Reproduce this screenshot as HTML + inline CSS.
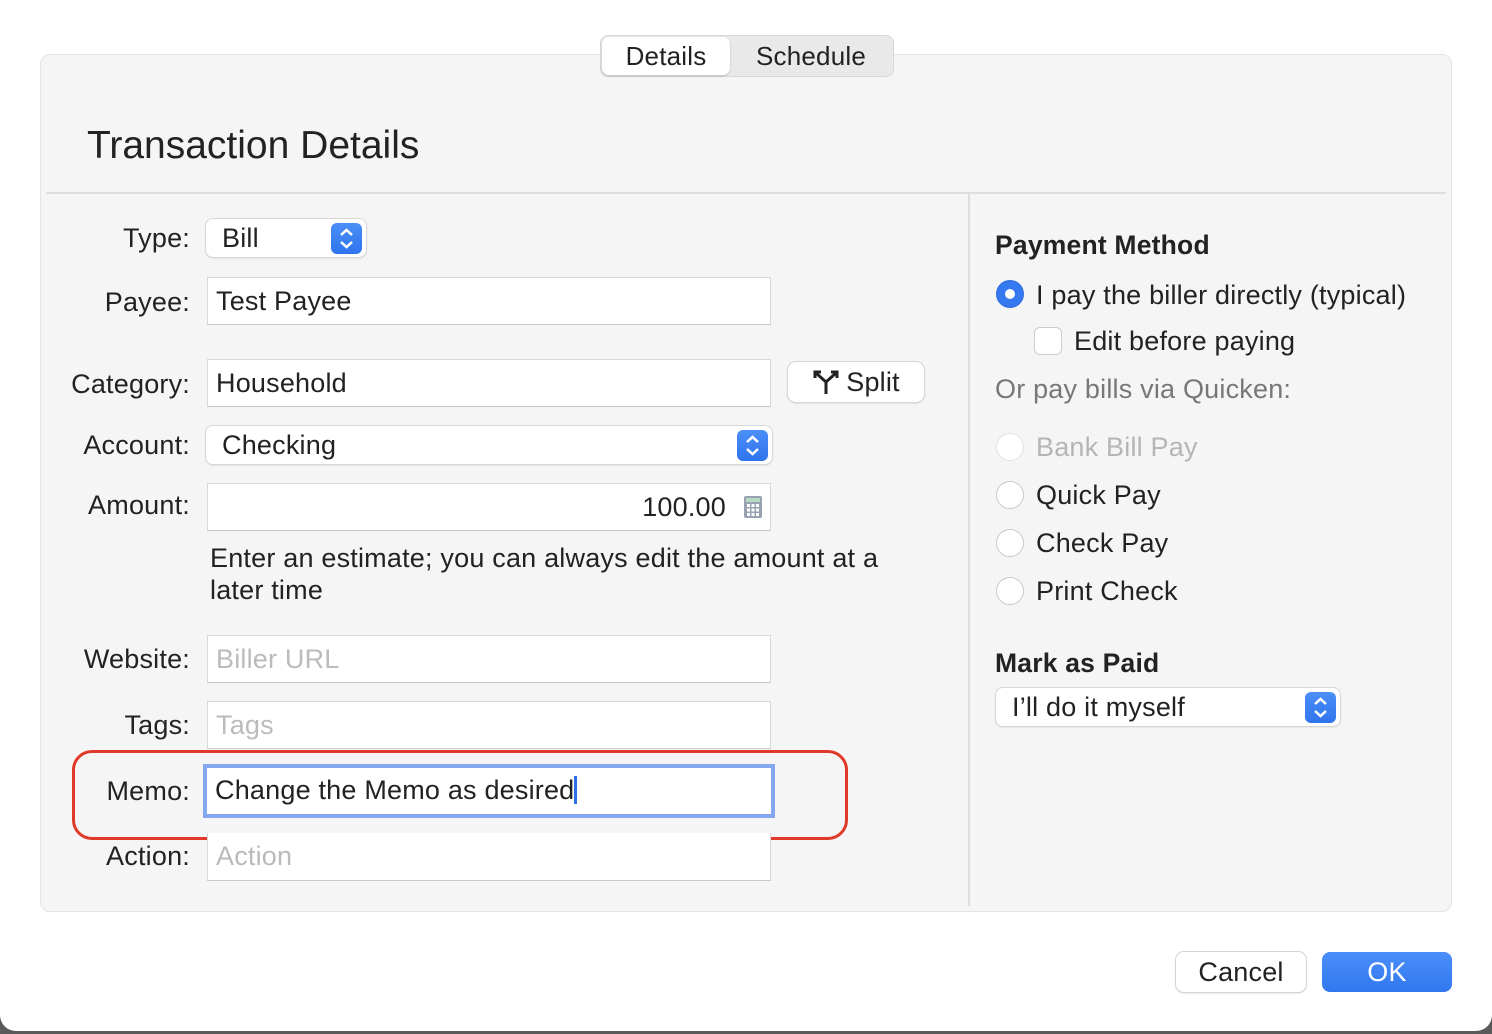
<!DOCTYPE html>
<html><head><meta charset="utf-8"><style>
*{margin:0;padding:0;box-sizing:border-box}
body{width:1492px;height:1034px;background:#5a5a5a;position:relative;overflow:hidden;font-family:"Liberation Sans",sans-serif;color:#222;font-size:27px;letter-spacing:0.2px}
.win{position:absolute;left:0;top:-20px;width:1492px;height:1051px;background:#fff;border-radius:16px}
.panel{position:absolute;left:40px;top:54px;width:1412px;height:858px;background:#f5f5f5;border:1px solid #e4e4e4;border-radius:10px}
.a{position:absolute;line-height:30px;white-space:nowrap}
.lbl{text-align:right;width:190px;left:0}
.field{position:absolute;background:#fff;border:1px solid #d8d8d8;border-bottom-color:#c8c8c8;line-height:46px;padding-left:8px}
.ph{color:#bbb}
.pop{position:absolute;background:#fff;border-radius:7px;box-shadow:0 0 0 1px #d6d6d6,0 1px 2px rgba(0,0,0,.15);line-height:38px;padding-left:16px}
.arrows{position:absolute;right:4px;top:4px;width:31px;height:31px;background:linear-gradient(#4b8ff7,#2f74ee);border-radius:6px}
.btn{position:absolute;background:#fff;border-radius:8px;box-shadow:0 0 0 1px #d4d4d4,0 1px 2px rgba(0,0,0,.2);text-align:center}
.radio{position:absolute;width:28px;height:28px;border-radius:50%;background:#fff;border:1px solid #c9c9c9}
</style></head><body>
<div class="win"></div>
<div class="panel"></div>
<div style="position:absolute;left:600px;top:35px;width:294px;height:42px;background:#e9e9e9;border:1px solid #d8d8d8;border-radius:8px"></div>
<div style="position:absolute;left:602px;top:37px;width:128px;height:38px;background:#fff;border-radius:7px;box-shadow:0 1px 2px rgba(0,0,0,.2)"></div>
<div class="a" style="left:602px;top:41px;width:128px;text-align:center;font-size:26px">Details</div>
<div class="a" style="left:732px;top:41px;width:158px;text-align:center;font-size:26px">Schedule</div>
<div class="a" style="left:87px;top:124px;font-size:39px;line-height:44px;letter-spacing:0">Transaction Details</div>
<div style="position:absolute;left:46px;top:192px;width:1400px;height:2px;background:#dedede"></div>
<div style="position:absolute;left:968px;top:194px;width:2px;height:712px;background:#dedede"></div>

<div class="a lbl" style="top:223px">Type:</div>
<div class="pop" style="left:206px;top:219px;width:160px;height:38px">Bill<div class="arrows"><svg width="31" height="31"><path d="M10 12l5.5-5 5.5 5M10 19l5.5 5 5.5-5" stroke="#fff" stroke-width="2.5" fill="none"/></svg></div></div>

<div class="a lbl" style="top:287px">Payee:</div>
<div class="field" style="left:207px;top:277px;width:564px;height:48px">Test Payee</div>

<div class="a lbl" style="top:369px">Category:</div>
<div class="field" style="left:207px;top:359px;width:564px;height:48px">Household</div>
<div class="btn" style="left:788px;top:362px;width:136px;height:40px;line-height:40px"><svg width="28" height="28" style="vertical-align:-5px;margin-right:6px" viewBox="0 0 28 28"><path d="M14 26V14L4 5M14 14l10-9M3 10V4h6M25 10V4h-6" stroke="#222" stroke-width="3" fill="none"/></svg>Split</div>

<div class="a lbl" style="top:430px">Account:</div>
<div class="pop" style="left:206px;top:426px;width:566px;height:38px">Checking<div class="arrows"><svg width="31" height="31"><path d="M10 12l5.5-5 5.5 5M10 19l5.5 5 5.5-5" stroke="#fff" stroke-width="2.5" fill="none"/></svg></div></div>

<div class="a lbl" style="top:490px">Amount:</div>
<div class="field" style="left:207px;top:483px;width:564px;height:48px;text-align:right;padding-right:44px">100.00</div>
<svg style="position:absolute;left:743px;top:495px" width="20" height="24"><rect x="1" y="1" width="18" height="22" rx="2" fill="#98a2b0"/><rect x="3" y="3" width="14" height="4" fill="#b5dcc0"/><g fill="#fff"><rect x="4" y="9" width="3" height="3"/><rect x="8.5" y="9" width="3" height="3"/><rect x="13" y="9" width="3" height="3"/><rect x="4" y="13.5" width="3" height="3"/><rect x="8.5" y="13.5" width="3" height="3"/><rect x="13" y="13.5" width="3" height="3"/><rect x="4" y="18" width="3" height="3"/><rect x="8.5" y="18" width="3" height="3"/><rect x="13" y="18" width="3" height="3"/></g></svg>
<div class="a" style="left:210px;top:542px;line-height:32px">Enter an estimate; you can always edit the amount at a<br>later time</div>

<div class="a lbl" style="top:644px">Website:</div>
<div class="field ph" style="left:207px;top:635px;width:564px;height:48px">Biller URL</div>
<div class="a lbl" style="top:710px">Tags:</div>
<div class="field ph" style="left:207px;top:701px;width:564px;height:48px">Tags</div>
<div class="a lbl" style="top:776px">Memo:</div>
<div class="field" style="left:203px;top:764px;width:572px;height:54px;border:4px solid #85a7f0;line-height:44px;padding-left:8px">Change the Memo as desired<span style="display:inline-block;width:3px;height:28px;background:#2f6fe8;vertical-align:-5px"></span></div>
<div style="position:absolute;left:72px;top:750px;width:776px;height:90px;border:3px solid #e0392b;border-radius:20px"></div>
<div class="a lbl" style="top:841px">Action:</div>
<div class="field ph" style="left:207px;top:833px;width:564px;height:48px;border-top:none">Action</div>

<div class="a" style="left:995px;top:230px;font-weight:bold;font-size:26.5px">Payment Method</div>
<div class="radio" style="left:996px;top:280px;background:#3479f0;border-color:#2e6ee0"><div style="position:absolute;left:8px;top:8px;width:10px;height:10px;border-radius:50%;background:#fff"></div></div>
<div class="a" style="left:1036px;top:280px">I pay the biller directly (typical)</div>
<div style="position:absolute;left:1034px;top:327px;width:28px;height:28px;background:#fff;border:1px solid #ccc;border-radius:6px"></div>
<div class="a" style="left:1074px;top:326px">Edit before paying</div>
<div class="a" style="left:995px;top:374px;color:#777">Or pay bills via Quicken:</div>
<div class="radio" style="left:996px;top:433px;border-color:#e2e2e2"></div>
<div class="a" style="left:1036px;top:432px;color:#b5b5b5">Bank Bill Pay</div>
<div class="radio" style="left:996px;top:481px"></div>
<div class="a" style="left:1036px;top:480px">Quick Pay</div>
<div class="radio" style="left:996px;top:529px"></div>
<div class="a" style="left:1036px;top:528px">Check Pay</div>
<div class="radio" style="left:996px;top:577px"></div>
<div class="a" style="left:1036px;top:576px">Print Check</div>
<div class="a" style="left:995px;top:648px;font-weight:bold;font-size:26.5px">Mark as Paid</div>
<div class="pop" style="left:996px;top:688px;width:344px;height:38px">I’ll do it myself<div class="arrows"><svg width="31" height="31"><path d="M10 12l5.5-5 5.5 5M10 19l5.5 5 5.5-5" stroke="#fff" stroke-width="2.5" fill="none"/></svg></div></div>

<div class="btn" style="left:1176px;top:952px;width:130px;height:40px;line-height:40px">Cancel</div>
<div style="position:absolute;left:1322px;top:952px;width:130px;height:40px;line-height:40px;border-radius:8px;background:linear-gradient(#4a8ff8,#3177f0);color:#fff;text-align:center">OK</div>
</body></html>
